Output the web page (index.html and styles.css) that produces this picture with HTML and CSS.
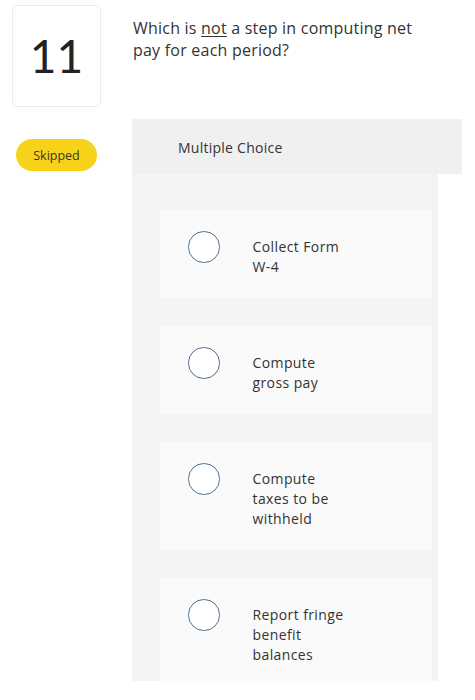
FILE: index.html
```html
<!DOCTYPE html>
<html>
<head>
<meta charset="utf-8">
<link rel="stylesheet" href="styles.css">
</head>
<body>
<div class="top">
  <div class="numbox">11</div>
  <div class="question">Which is <u>not</u> a step in computing net<br>pay for each period?</div>
</div>
<div class="main">
  <div class="side">
    <span class="pill">Skipped</span>
  </div>
  <div class="mc">
    <div class="mc-head">Multiple Choice</div>
    <div class="panel">
      <div class="card">
        <span class="radio"></span>
        <div class="opt">Collect Form<br>W-4</div>
      </div>
      <div class="card">
        <span class="radio"></span>
        <div class="opt">Compute<br>gross pay</div>
      </div>
      <div class="card">
        <span class="radio"></span>
        <div class="opt">Compute<br>taxes to be<br>withheld</div>
      </div>
      <div class="card">
        <span class="radio"></span>
        <div class="opt">Report fringe<br>benefit<br>balances</div>
      </div>
    </div>
  </div>
</div>
</body>
</html>
```
FILE: styles.css
```css
html, body {
  margin: 0;
  padding: 0;
  background: #ffffff;
}
body {
  font-family: "Open Sans", "Lato", sans-serif;
  color: #333333;
  width: 475px;
  height: 700px;
  overflow: hidden;
}
.top {
  display: flex;
  padding-top: 5px;
}
.numbox {
  margin-left: 12px;
  width: 87px;
  height: 100px;
  border: 1px solid #ececec;
  border-radius: 5px;
  display: flex;
  align-items: center;
  justify-content: center;
  font-family: "Lato", sans-serif;
  font-size: 46px;
  color: #222222;
  line-height: 1;
}
.question {
  margin-left: 32px;
  padding-top: 12px;
  font-size: 16px;
  letter-spacing: 0.22px;
  line-height: 22px;
  color: #333333;
}
.question u {
  text-underline-offset: 2px;
}
.main {
  display: flex;
  margin-top: 12px;
}
.side {
  width: 132px;
  flex: none;
}
.pill {
  display: inline-flex;
  align-items: center;
  justify-content: center;
  margin-top: 20px;
  margin-left: 16px;
  width: 81px;
  height: 32px;
  border-radius: 16px;
  background: #f6d31a;
  font-size: 12.5px;
  color: #3a3520;
}
.mc {
  width: 330px;
}
.mc-head {
  height: 55px;
  background: #f0f0f0;
  padding-left: 46px;
  display: flex;
  align-items: center;
  font-size: 14px;
  letter-spacing: 0.25px;
  box-sizing: border-box;
  padding-top: 1px;
}
.panel {
  width: 306px;
  height: 507px;
  box-sizing: border-box;
  background: #f4f4f4;
  padding: 36px 6px 0 28px;
  overflow: hidden;
  display: flex;
  flex-direction: column;
  gap: 28px;
}
.card {
  flex: none;
  background: #fafafa;
  display: flex;
  align-items: flex-start;
  padding: 21px 0 21px 28px;
}
.radio {
  flex: none;
  width: 29.5px;
  height: 29.5px;
  border: 1.25px solid #52708f;
  border-radius: 50%;
  background: #ffffff;
}
.opt {
  margin-left: 33px;
  margin-top: 6px;
  font-size: 14px;
  letter-spacing: 0.4px;
  line-height: 20px;
  color: #333333;
}
```
